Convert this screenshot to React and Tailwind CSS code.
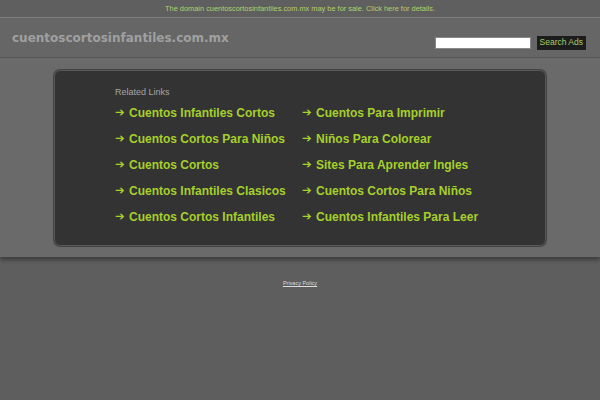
const left = [
  'Cuentos Infantiles Cortos',
  'Cuentos Cortos Para Niños',
  'Cuentos Cortos',
  'Cuentos Infantiles Clasicos',
  'Cuentos Cortos Infantiles',
];

const right = [
  'Cuentos Para Imprimir',
  'Niños Para Colorear',
  'Sites Para Aprender Ingles',
  'Cuentos Cortos Para Niños',
  'Cuentos Infantiles Para Leer',
];

function LinkItem({ label }) {
  return (
    <a href="#" className="flex items-center h-[26px] text-[12px] font-bold text-[#a6d02b] whitespace-nowrap">
      <span className="w-[14px] font-['DejaVu_Sans',sans-serif] text-[11.5px] leading-none">➔</span>
      {label}
    </a>
  );
}

export default function App() {
  return (
    <div className="w-[600px] h-[400px] bg-[#5e5e5e] font-['Liberation_Sans',Arial,sans-serif] overflow-hidden">
      {/* Sale banner */}
      <div className="h-[18px] bg-[#5f5f5f] border-b border-[#7d7d7d] flex items-center justify-center text-[7.4px] text-[#b5cf6a]">
        The domain cuentoscortosinfantiles.com.mx may be for sale. Click here for details.
      </div>

      {/* Header */}
      <div className="h-[40px] bg-[#666666] border-b border-[#595959] flex items-center justify-between pl-[12px] pr-[14px]">
        <div className="font-['DejaVu_Sans',Verdana,sans-serif] font-bold text-[12px] text-[#a0a0a0]">
          cuentoscortosinfantiles.com.mx
        </div>
        <div className="flex items-center gap-[6px] mt-[10px]">
          <div className="w-[96px] h-[12px] bg-white border border-[#888]" />
          <button className="h-[14px] px-[3px] bg-[#1c1c1c] text-[#a6cf6a] text-[8.5px] leading-none">
            Search Ads
          </button>
        </div>
      </div>

      {/* Main */}
      <div className="h-[199px] bg-[#6a6a6a] pt-[12px] shadow-[0_3px_4px_rgba(0,0,0,0.35)] relative">
        <div className="mx-[54px] h-[176px] bg-[#333333] rounded-[6px] border border-[#585858] shadow-[0_0_0_1px_#444] pl-[60px] pt-[15px]">
          <div className="text-[9px] text-[#a5a5a5]">Related Links</div>
          <div className="flex">
            <div className="w-[187px] flex flex-col">
              {left.map((l, i) => (
                <LinkItem key={i} label={l} />
              ))}
            </div>
            <div className="flex flex-col">
              {right.map((l, i) => (
                <LinkItem key={i} label={l} />
              ))}
            </div>
          </div>
        </div>
      </div>

      {/* Footer */}
      <div className="flex justify-center pt-[22px]">
        <a href="#" className="text-[5.5px] text-[#dddddd] underline">Privacy Policy</a>
      </div>
    </div>
  );
}
